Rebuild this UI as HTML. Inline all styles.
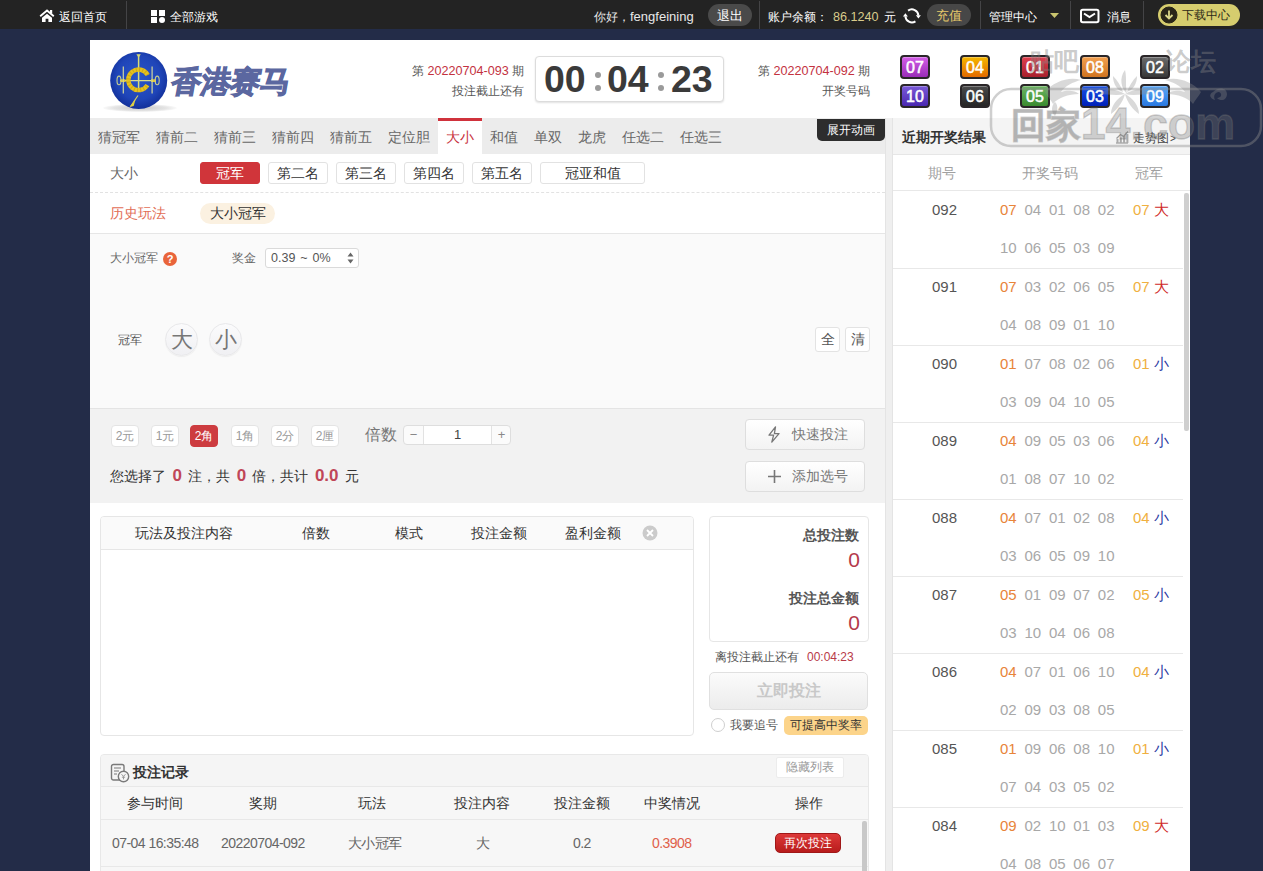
<!DOCTYPE html>
<html><head><meta charset="utf-8">
<style>
*{margin:0;padding:0;box-sizing:border-box}
html,body{width:1263px;height:871px;overflow:hidden}
body{background:#232c48;font-family:"Liberation Sans",sans-serif;font-size:12px;color:#333;position:relative}
.a{position:absolute;white-space:nowrap}
.ball{width:30px;height:24px;border:2px solid #2a2628;border-radius:4px;color:#fff;font-size:16px;-webkit-text-stroke:0.5px #fff;line-height:21px;text-align:center;box-shadow:inset 0 1px 0 rgba(255,255,255,.3)}
#top{position:absolute;left:0;top:0;width:1263px;height:29px;background:#232323;color:#fff;font-size:13px}
#top span.a{line-height:30px;top:2px;font-size:12px}
.sep{position:absolute;top:1px;width:1px;height:28px;background:#444446}
#top .pill{position:absolute;top:4px;height:22px;border-radius:11px;line-height:23px;text-align:center;font-size:13px}
#wrap{position:absolute;left:90px;top:40px;width:1100px;height:831px;background:#fff;overflow:hidden}

.sbtn{height:22px;border:1px solid #e2e2e2;border-radius:3px;background:#fff;text-align:center;line-height:20px;font-size:14px;color:#333}
.ballc{width:33px;height:33px;border-radius:50%;background:linear-gradient(#fbfbfc,#f0f0f3);border:1px solid #e8e8ea;box-shadow:0 1px 1px rgba(0,0,0,.05);text-align:center;line-height:31px;font-size:22px;color:#777}
.qbtn{width:25px;height:25px;border:1px solid #e3e3e3;border-radius:3px;background:#fff;text-align:center;line-height:23px;font-size:14px;color:#555}
.mbtn{width:28px;height:22px;border:1px solid #e4e4e4;border-radius:4px;background:#fff;text-align:center;line-height:20px;font-size:12px;color:#9a9a9a}
.rn{color:#c04658;font-size:17px;font-weight:bold;padding:0 2.5px}
.gbtn{width:120px;height:31px;border:1px solid #dedede;border-radius:4px;background:linear-gradient(#fff,#f3f3f3);font-size:14px;line-height:29px;color:#777;padding-left:46px}

.th{font-size:14px;line-height:22px;color:#333}
.rth{font-size:14px;line-height:22px;color:#333}
.rtd{font-size:14px;line-height:20px;color:#666;letter-spacing:-0.55px}

.srow{font-size:15px;line-height:38px}
.nums{color:#a8a8a8;word-spacing:3.6px}
</style></head><body>
<div id="top">
  <svg class="a" style="left:36px;top:6px" width="24" height="20" viewBox="0 0 24 20"><path d="M4.2 10.2L11 4.6l6.8 5.6" fill="none" stroke="#fff" stroke-width="1.9"/><rect x="14" y="4" width="2.2" height="3.6" fill="#fff"/><path d="M6 11.8L11 7.7l5 4.1V16h-3.6v-3.2h-2.8V16H6z" fill="#fff"/></svg>
  <span class="a" style="left:59px">返回首页</span>
  <div class="sep" style="left:126px"></div>
  <svg class="a" style="left:151px;top:10px" width="14" height="13" viewBox="0 0 14 13"><rect x="0" y="0" width="6" height="6" fill="#fff"/><rect x="8" y="0" width="6" height="6" fill="#fff"/><rect x="0" y="7" width="6" height="6" fill="#fff"/><circle cx="11" cy="10" r="3" fill="#fff"/></svg>
  <span class="a" style="left:170px">全部游戏</span>

  <span class="a" style="left:594px;color:#e8e8e8">你好，<span style="font-size:13px">fengfeining</span></span>
  <div class="pill a" style="left:708px;width:44px;background:#4a4a4a;color:#fff">退出</div>
  <div class="sep" style="left:759px"></div>
  <span class="a" style="left:768px">账户余额：</span>
  <span class="a" style="left:833px;color:#d9cc8c;font-size:12.6px">86.1240</span>
  <span class="a" style="left:884px">元</span>
  <svg class="a" style="left:902px;top:7px" width="19" height="17" viewBox="-1 0 19 17"><path d="M5.08 3.64A6.5 6.5 0 0 1 15.39 8.56M12.44 14.35A6.5 6.5 0 0 1 2.41 9.24" fill="none" stroke="#fff" stroke-width="2"/><path d="M12.9 8.2h5l-2.5 3.4zM-0.1 9.6h5l-2.5-3.4z" fill="#fff"/></svg>
  <div class="pill a" style="left:927px;width:44px;background:#474747;color:#e6c96a">充值</div>
  <div class="sep" style="left:980px"></div>
  <span class="a" style="left:989px">管理中心</span>
  <svg class="a" style="left:1050px;top:13px" width="9" height="6" viewBox="0 0 9 6"><path d="M0 0h9L4.5 5z" fill="#c9c46e"/></svg>
  <div class="sep" style="left:1070px"></div>
  <svg class="a" style="left:1080px;top:8px" width="20" height="16" viewBox="0 0 20 16"><rect x="1" y="1.8" width="17.5" height="12.5" rx="1.8" fill="none" stroke="#fff" stroke-width="2"/><path d="M4 5.5l5.5 3.6 5.5-3.6" fill="none" stroke="#fff" stroke-width="1.9"/></svg>
  <span class="a" style="left:1107px">消息</span>
  <div class="sep" style="left:1143px"></div>
  <div class="pill a" style="left:1158px;width:82px;background:#d6cd6e;color:#2e2a18;text-align:left;padding-left:24px;font-size:12px!important">下载中心</div>
  <svg class="a" style="left:1160px;top:6px" width="18" height="18" viewBox="0 0 18 18"><circle cx="9" cy="9" r="8" fill="#2a2618" stroke="#2a2618"/><path d="M9 4.5v8M5.5 9l3.5 3.5L12.5 9" fill="none" stroke="#dcd88a" stroke-width="1.8"/></svg>
</div>

<div id="wrap">
</div>

<!-- header -->
<div class="a" style="left:103px;top:104px;width:74px;height:8px;border-radius:50%;background:radial-gradient(ellipse at center,#c8c8c8 0%,#e4e4e4 50%,rgba(255,255,255,0) 75%)"></div>
<svg class="a" style="left:109px;top:51px" width="59" height="59" viewBox="0 0 59 59">
 <defs><radialGradient id="lg" cx="50%" cy="45%" r="55%"><stop offset="0" stop-color="#2a55c8"/><stop offset="0.7" stop-color="#1f45b8"/><stop offset="1" stop-color="#12309a"/></radialGradient></defs>
 <circle cx="29.7" cy="29.4" r="28.5" fill="url(#lg)"/>
 <g fill="none">
  <path d="M29.6 5v36" stroke="#d8dc78" stroke-width="1.5"/>
  <path d="M27.4 3.2h4.4l-2.2 3.6z" fill="#d8dc78"/>
  <path d="M11 29.6h36" stroke="#d8dc90" stroke-width="1.3"/>
  <path d="M11.5 29.6h5M42 29.6h5" stroke="#e8c82a" stroke-width="2.6"/>
  <path d="M14.3 15.4v27M43.1 15.4v27" stroke="#d0d8a0" stroke-width="1.2"/>
  <ellipse cx="10" cy="29.4" rx="2" ry="4.3" stroke="#c8d090" stroke-width="1.1"/>
  <ellipse cx="48.2" cy="29.4" rx="2" ry="4.3" stroke="#c8d090" stroke-width="1.1"/>
  <path d="M38.7 24.0A10.3 10.3 0 1 0 38.4 34.2" stroke="#e6c21e" stroke-width="4.4"/>
  <path d="M38.7 24.0A10.3 10.3 0 1 0 38.4 34.2" stroke="#b08a10" stroke-width="4.4" stroke-dasharray="1 2.2" opacity="0.45"/>
  <path d="M29 44.5l-7.5 11" stroke="#d8d060" stroke-width="1.2"/>
  <path d="M26.5 48.5l-5.8 7.5 4-1z" fill="#e0d040"/>
 </g>
</svg>
<div class="a" style="left:172px;top:62px;font-size:30px;line-height:40px;font-weight:900;color:#5b67a0;letter-spacing:-0.5px;transform:skewX(-10deg);-webkit-text-stroke:1px #5b67a0">香港赛马</div>

<div class="a" style="left:400px;top:61px;width:124px;text-align:right;font-size:12px;line-height:20px;color:#555">第 <span style="color:#c3323f;font-size:12.6px">20220704-093</span> 期</div>
<div class="a" style="left:400px;top:81px;width:124px;text-align:right;font-size:12px;line-height:20px;color:#555">投注截止还有</div>
<div class="a" style="left:535px;top:56px;width:189px;height:46px;border:1px solid #dcdcdc;border-radius:4px;box-shadow:0 1px 2px rgba(0,0,0,.12);background:#fff"></div>
<div class="a" style="left:544px;top:57px;font-size:37.5px;line-height:44px;font-weight:bold;color:#3a3a3a">00</div>
<div class="a" style="left:607px;top:57px;font-size:37.5px;line-height:44px;font-weight:bold;color:#3a3a3a">04</div>
<div class="a" style="left:671px;top:57px;font-size:37.5px;line-height:44px;font-weight:bold;color:#3a3a3a">23</div>
<div class="a" style="left:595px;top:72px;width:6px;height:6px;border-radius:3px;background:#9a9a9a"></div>
<div class="a" style="left:595px;top:85px;width:6px;height:6px;border-radius:3px;background:#9a9a9a"></div>
<div class="a" style="left:658px;top:72px;width:6px;height:6px;border-radius:3px;background:#9a9a9a"></div>
<div class="a" style="left:658px;top:85px;width:6px;height:6px;border-radius:3px;background:#9a9a9a"></div>

<div class="a" style="left:740px;top:61px;width:130px;text-align:right;font-size:12px;line-height:20px;color:#555">第 <span style="color:#c3323f;font-size:12.6px">20220704-092</span> 期</div>
<div class="a" style="left:740px;top:81px;width:130px;text-align:right;font-size:12px;line-height:20px;color:#555">开奖号码</div>
<div class="ball a" style="left:900px;top:55px;background:linear-gradient(#d45ee8,#9a2cb8)">07</div>
<div class="ball a" style="left:960px;top:55px;background:linear-gradient(#f5b800,#e36a00)">04</div>
<div class="ball a" style="left:1020px;top:55px;background:linear-gradient(#e0404e,#a8202c)">01</div>
<div class="ball a" style="left:1080px;top:55px;background:linear-gradient(#f2a050,#d07420)">08</div>
<div class="ball a" style="left:1140px;top:55px;background:linear-gradient(#6a6a6a,#383838)">02</div>
<div class="ball a" style="left:900px;top:84px;background:linear-gradient(#7a5ad8,#4a28b0)">10</div>
<div class="ball a" style="left:960px;top:84px;background:linear-gradient(#4a4a4a,#262626)">06</div>
<div class="ball a" style="left:1020px;top:84px;background:linear-gradient(#6cb860,#3a8a30)">05</div>
<div class="ball a" style="left:1080px;top:84px;background:linear-gradient(#1650e8,#0020b8)">03</div>
<div class="ball a" style="left:1140px;top:84px;background:linear-gradient(#5aa8f8,#2a78e0)">09</div>


<!-- tabs -->
<div class="a" style="left:90px;top:118px;width:795px;height:36px;background:#ececec"></div>
<div class="a" style="left:438px;top:118px;width:44px;height:36px;background:#fff;border-top:3px solid #d0323c"></div>
<div class="tabs a" style="left:90px;top:119px;height:36px;line-height:37px;font-size:14px;color:#666">
<span style="padding:0 8px">猜冠军</span><span style="padding:0 8px">猜前二</span><span style="padding:0 8px">猜前三</span><span style="padding:0 8px">猜前四</span><span style="padding:0 8px">猜前五</span><span style="padding:0 8px">定位胆</span><span style="padding:0 8px;color:#c8323c">大小</span><span style="padding:0 8px">和值</span><span style="padding:0 8px">单双</span><span style="padding:0 8px">龙虎</span><span style="padding:0 8px">任选二</span><span style="padding:0 8px">任选三</span>
</div>
<div class="a" style="left:817px;top:119px;width:68px;height:22px;background:#2d2d2d;border-radius:0 0 5px 5px;color:#fff;font-size:12px;line-height:22px;text-align:center">展开动画</div>
<div class="a" style="left:885px;top:118px;width:8px;height:753px;background:#efefef;border-left:1px solid #e4e4e4;border-right:1px solid #e4e4e4"></div>

<!-- sub-tabs -->
<div class="a" style="left:110px;top:162px;line-height:22px;font-size:14px;color:#666">大小</div>
<div class="a sbtn" style="left:200px;top:162px;width:60px;background:#d0353a;border-color:#d0353a;color:#fff">冠军</div>
<div class="a sbtn" style="left:268px;top:162px;width:60px">第二名</div>
<div class="a sbtn" style="left:336px;top:162px;width:60px">第三名</div>
<div class="a sbtn" style="left:404px;top:162px;width:60px">第四名</div>
<div class="a sbtn" style="left:472px;top:162px;width:60px">第五名</div>
<div class="a sbtn" style="left:540px;top:162px;width:105px">冠亚和值</div>
<div class="a" style="left:90px;top:192px;width:795px;height:0;border-top:1px dashed #e2e2e2"></div>
<div class="a" style="left:110px;top:202px;line-height:22px;font-size:14px;color:#e26d55">历史玩法</div>
<div class="a" style="left:200px;top:203px;width:75px;height:21px;border-radius:11px;background:#fbf1e1;line-height:21px;text-align:center;font-size:14px;color:#333">大小冠军</div>
<div class="a" style="left:90px;top:233px;width:795px;height:1px;background:#e6e6e6"></div>

<!-- play area -->
<div class="a" style="left:90px;top:234px;width:795px;height:174px;background:#fafafa"></div>
<div class="a" style="left:110px;top:249px;line-height:19px;font-size:12px;color:#666">大小冠军</div>
<div class="a" style="left:163px;top:252px;width:14px;height:14px;border-radius:7px;background:#e9643a;color:#fff;font-size:11px;line-height:14px;text-align:center;font-weight:bold">?</div>
<div class="a" style="left:232px;top:249px;line-height:19px;font-size:12px;color:#666">奖金</div>
<div class="a" style="left:265px;top:248px;width:94px;height:20px;border:1px solid #dadada;border-radius:3px;background:#fff;font-size:12.5px;line-height:19px;color:#555;padding-left:5px;word-spacing:1.5px">0.39 ~ 0%</div>
<svg class="a" style="left:347px;top:252px" width="7" height="12" viewBox="0 0 7 12"><path d="M3.5 0.5L6.5 4.5h-6zM3.5 11.5L6.5 7.5h-6z" fill="#666"/></svg>

<div class="a" style="left:118px;top:331px;line-height:19px;font-size:12px;color:#555">冠军</div>
<div class="a ballc" style="left:165px;top:323px">大</div>
<div class="a ballc" style="left:209px;top:323px">小</div>
<div class="a qbtn" style="left:815px;top:327px">全</div>
<div class="a qbtn" style="left:845px;top:327px">清</div>
<div class="a" style="left:90px;top:408px;width:795px;height:1px;background:#e4e4e4"></div>

<!-- money area -->
<div class="a" style="left:90px;top:409px;width:795px;height:94px;background:#f2f2f2"></div>
<div class="a mbtn" style="left:111px;top:425px">2元</div>
<div class="a mbtn" style="left:151px;top:425px">1元</div>
<div class="a mbtn" style="left:190px;top:425px;background:#cd3c40;border-color:#cd3c40;color:#fff">2角</div>
<div class="a mbtn" style="left:231px;top:425px">1角</div>
<div class="a mbtn" style="left:271px;top:425px">2分</div>
<div class="a mbtn" style="left:311px;top:425px">2厘</div>
<div class="a" style="left:365px;top:424px;line-height:22px;font-size:15.5px;color:#777">倍数</div>
<div class="a" style="left:403px;top:425px;width:108px;height:20px;border:1px solid #dedede;border-radius:4px;background:#fbfbfb"></div>
<div class="a" style="left:423px;top:426px;width:69px;height:18px;background:#fff;border-left:1px solid #e2e2e2;border-right:1px solid #e2e2e2;text-align:center;font-size:13px;line-height:18px;color:#444">1</div>
<div class="a" style="left:404px;top:426px;width:19px;line-height:18px;text-align:center;color:#888;font-size:13px">−</div>
<div class="a" style="left:492px;top:426px;width:19px;line-height:18px;text-align:center;color:#888;font-size:13px">+</div>
<div class="a" style="left:110px;top:465px;line-height:22px;font-size:14px;color:#333">您选择了 <b class="rn">0</b> 注，共 <b class="rn">0</b> 倍，共计 <b class="rn">0.0</b> 元</div>
<div class="a gbtn" style="left:745px;top:419px">快速投注</div>
<svg class="a" style="left:767px;top:426px" width="14" height="17" viewBox="0 0 14 17"><path d="M8.5 0.8L2 9.2h4.6L4.8 16.2 12 7.6H7.4z" fill="none" stroke="#777" stroke-width="1.3" stroke-linejoin="round"/></svg>
<div class="a gbtn" style="left:745px;top:461px">添加选号</div>
<svg class="a" style="left:767px;top:469px" width="15" height="15" viewBox="0 0 15 15"><path d="M7.5 1v13M1 7.5h13" stroke="#777" stroke-width="1.6"/></svg>

<!-- bet list table -->
<div class="a" style="left:100px;top:516px;width:594px;height:220px;border:1px solid #e6e6e6;border-radius:4px;background:#fff;overflow:hidden">
 <div style="height:33px;background:#fafafa;border-bottom:1px solid #e6e6e6"></div>
</div>
<div class="a th" style="left:135px;top:522px">玩法及投注内容</div>
<div class="a th" style="left:302px;top:522px">倍数</div>
<div class="a th" style="left:395px;top:522px">模式</div>
<div class="a th" style="left:471px;top:522px">投注金额</div>
<div class="a th" style="left:565px;top:522px">盈利金额</div>
<svg class="a" style="left:642px;top:525px" width="16" height="16" viewBox="0 0 16 16"><circle cx="8" cy="8" r="7.5" fill="#cbcbcb"/><path d="M5 5l6 6M11 5l-6 6" stroke="#fff" stroke-width="1.8"/></svg>

<!-- summary panel -->
<div class="a" style="left:709px;top:516px;width:160px;height:126px;border:1px solid #e6e6e6;border-radius:4px;background:#fff"></div>
<div class="a" style="left:709px;top:524px;width:150px;text-align:right;font-size:14px;font-weight:bold;line-height:22px;color:#555">总投注数</div>
<div class="a" style="left:709px;top:546px;width:151px;text-align:right;font-size:21px;line-height:28px;color:#b53a4a">0</div>
<div class="a" style="left:709px;top:587px;width:150px;text-align:right;font-size:14px;font-weight:bold;line-height:22px;color:#555">投注总金额</div>
<div class="a" style="left:709px;top:609px;width:151px;text-align:right;font-size:21px;line-height:28px;color:#b53a4a">0</div>
<div class="a" style="left:715px;top:647px;font-size:12px;line-height:20px;color:#555">离投注截止还有</div>
<div class="a" style="left:807px;top:647px;font-size:12px;line-height:20px;color:#b83a48">00:04:23</div>
<div class="a" style="left:709px;top:672px;width:159px;height:38px;border:1px solid #e0e0e0;border-radius:5px;background:linear-gradient(#fbfbfb,#ececec);text-align:center;font-size:16px;font-weight:bold;line-height:36px;color:#c8c8c8">立即投注</div>
<div class="a" style="left:711px;top:718px;width:14px;height:14px;border:1px solid #cfcfcf;border-radius:50%;background:#fff"></div>
<div class="a" style="left:730px;top:715px;font-size:12px;line-height:20px;color:#555">我要追号</div>
<div class="a" style="left:784px;top:716px;width:84px;height:19px;border-radius:5px;background:#fcd48a;text-align:center;font-size:12px;line-height:19px;color:#333">可提高中奖率</div>

<!-- bet records -->
<div class="a" style="left:100px;top:754px;width:769px;height:130px;border:1px solid #e8e8e8;border-radius:4px;background:#f7f7f7;overflow:hidden">
 <div style="height:32px;background:#f5f5f5;border-bottom:1px solid #e8e8e8"></div>
 <div style="height:33px;background:#f7f7f7;border-bottom:1px solid #e8e8e8"></div>
 <div style="height:47px;background:#f7f7f7;border-bottom:1px solid #e8e8e8"></div>
</div>
<svg class="a" style="left:110px;top:763px" width="20" height="20" viewBox="0 0 20 20"><rect x="1.5" y="1.5" width="12.5" height="15.5" rx="2" fill="none" stroke="#7a7a7a" stroke-width="1.4"/><path d="M4 5h7M4 8h5M4 11h3" stroke="#7a7a7a" stroke-width="1.2"/><circle cx="13.5" cy="13.5" r="5.2" fill="#f5f5f5" stroke="#7a7a7a" stroke-width="1.4"/><path d="M11.5 11.2l2 2.2 2-2.2M13.5 13.4v3M11.9 14.2h3.2" fill="none" stroke="#999" stroke-width="1"/></svg>
<div class="a" style="left:133px;top:761px;font-size:14px;font-weight:bold;line-height:22px;color:#333">投注记录</div>
<div class="a" style="left:776px;top:757px;width:68px;height:21px;border:1px solid #ececec;border-radius:2px;background:#fff;text-align:center;font-size:12px;line-height:19px;color:#999">隐藏列表</div>
<div class="a rth" style="left:127px;top:792px">参与时间</div>
<div class="a rth" style="left:249px;top:792px">奖期</div>
<div class="a rth" style="left:358px;top:792px">玩法</div>
<div class="a rth" style="left:454px;top:792px">投注内容</div>
<div class="a rth" style="left:554px;top:792px">投注金额</div>
<div class="a rth" style="left:644px;top:792px">中奖情况</div>
<div class="a rth" style="left:795px;top:792px">操作</div>
<div class="a rtd" style="left:112px;top:833px">07-04 16:35:48</div>
<div class="a rtd" style="left:221px;top:833px">20220704-092</div>
<div class="a rtd" style="left:348px;top:833px">大小冠军</div>
<div class="a rtd" style="left:476px;top:833px">大</div>
<div class="a rtd" style="left:573px;top:833px">0.2</div>
<div class="a rtd" style="left:652px;top:833px;color:#e0604a">0.3908</div>
<div class="a" style="left:775px;top:833px;width:66px;height:20px;border:1px solid #a01818;border-radius:5px;background:linear-gradient(#dd3838,#b81c1c);text-align:center;font-size:12px;line-height:18px;color:#fff">再次投注</div>
<div class="a" style="left:862px;top:821px;width:5px;height:60px;border-radius:2px;background:#c8c8c8"></div>

<!-- sidebar -->
<div class="a" style="left:893px;top:118px;width:297px;height:37px;background:#f4f4f4;border-bottom:1px solid #e6e6e6"></div>
<div class="a" style="left:902px;top:126px;font-size:14px;font-weight:bold;line-height:22px;color:#333">近期开奖结果</div>
<svg class="a" style="left:1115px;top:130px" width="14" height="14" viewBox="0 0 14 14"><path d="M1 13h12" stroke="#999" stroke-width="1.2"/><rect x="1.5" y="9" width="2" height="4" fill="#aaa"/><rect x="4.8" y="7.5" width="2" height="5.5" fill="#aaa"/><rect x="8.1" y="6" width="2" height="7" fill="#aaa"/><rect x="11.4" y="4" width="2" height="9" fill="#aaa"/><path d="M1.5 8.5l4-4 3 2 4.5-5" fill="none" stroke="#999" stroke-width="1.2"/></svg>
<div class="a" style="left:1133px;top:127px;font-size:12px;line-height:22px;color:#444">走势图<span style="font-size:10px;padding-left:1px">&gt;</span></div>
<div class="a" style="left:893px;top:155px;width:297px;height:36px;background:#fff;border-bottom:1px solid #e8e8e8"></div>
<div class="a" style="left:928px;top:162px;font-size:14px;line-height:22px;color:#a0a0a0">期号</div>
<div class="a" style="left:1022px;top:162px;font-size:14px;line-height:22px;color:#a0a0a0">开奖号码</div>
<div class="a" style="left:1135px;top:162px;font-size:14px;line-height:22px;color:#a0a0a0">冠军</div>
<div class="a" style="left:1184px;top:193px;width:5px;height:238px;border-radius:2px;background:#cfcfcf"></div>
<div class="a" style="left:893px;top:268px;width:290px;height:1px;background:#e8e8e8"></div>
<div class="a srow" style="left:932px;top:191px;color:#555">092</div>
<div class="a srow nums" style="left:1000px;top:191px"><span style="color:#e8843a">07</span> 04 01 08 02<br>10 06 05 03 09</div>
<div class="a srow" style="left:1133px;top:191px"><span style="color:#f0b040">07</span> <span style="color:#d02a2a">大</span></div>
<div class="a" style="left:893px;top:345px;width:290px;height:1px;background:#e8e8e8"></div>
<div class="a srow" style="left:932px;top:268px;color:#555">091</div>
<div class="a srow nums" style="left:1000px;top:268px"><span style="color:#e8843a">07</span> 03 02 06 05<br>04 08 09 01 10</div>
<div class="a srow" style="left:1133px;top:268px"><span style="color:#f0b040">07</span> <span style="color:#d02a2a">大</span></div>
<div class="a" style="left:893px;top:422px;width:290px;height:1px;background:#e8e8e8"></div>
<div class="a srow" style="left:932px;top:345px;color:#555">090</div>
<div class="a srow nums" style="left:1000px;top:345px"><span style="color:#e8843a">01</span> 07 08 02 06<br>03 09 04 10 05</div>
<div class="a srow" style="left:1133px;top:345px"><span style="color:#f0b040">01</span> <span style="color:#2838a0">小</span></div>
<div class="a" style="left:893px;top:499px;width:290px;height:1px;background:#e8e8e8"></div>
<div class="a srow" style="left:932px;top:422px;color:#555">089</div>
<div class="a srow nums" style="left:1000px;top:422px"><span style="color:#e8843a">04</span> 09 05 03 06<br>01 08 07 10 02</div>
<div class="a srow" style="left:1133px;top:422px"><span style="color:#f0b040">04</span> <span style="color:#2838a0">小</span></div>
<div class="a" style="left:893px;top:576px;width:290px;height:1px;background:#e8e8e8"></div>
<div class="a srow" style="left:932px;top:499px;color:#555">088</div>
<div class="a srow nums" style="left:1000px;top:499px"><span style="color:#e8843a">04</span> 07 01 02 08<br>03 06 05 09 10</div>
<div class="a srow" style="left:1133px;top:499px"><span style="color:#f0b040">04</span> <span style="color:#2838a0">小</span></div>
<div class="a" style="left:893px;top:653px;width:290px;height:1px;background:#e8e8e8"></div>
<div class="a srow" style="left:932px;top:576px;color:#555">087</div>
<div class="a srow nums" style="left:1000px;top:576px"><span style="color:#e8843a">05</span> 01 09 07 02<br>03 10 04 06 08</div>
<div class="a srow" style="left:1133px;top:576px"><span style="color:#f0b040">05</span> <span style="color:#2838a0">小</span></div>
<div class="a" style="left:893px;top:730px;width:290px;height:1px;background:#e8e8e8"></div>
<div class="a srow" style="left:932px;top:653px;color:#555">086</div>
<div class="a srow nums" style="left:1000px;top:653px"><span style="color:#e8843a">04</span> 07 01 06 10<br>02 09 03 08 05</div>
<div class="a srow" style="left:1133px;top:653px"><span style="color:#f0b040">04</span> <span style="color:#2838a0">小</span></div>
<div class="a" style="left:893px;top:807px;width:290px;height:1px;background:#e8e8e8"></div>
<div class="a srow" style="left:932px;top:730px;color:#555">085</div>
<div class="a srow nums" style="left:1000px;top:730px"><span style="color:#e8843a">01</span> 09 06 08 10<br>07 04 03 05 02</div>
<div class="a srow" style="left:1133px;top:730px"><span style="color:#f0b040">01</span> <span style="color:#2838a0">小</span></div>
<div class="a" style="left:893px;top:884px;width:290px;height:1px;background:#e8e8e8"></div>
<div class="a srow" style="left:932px;top:807px;color:#555">084</div>
<div class="a srow nums" style="left:1000px;top:807px"><span style="color:#e8843a">09</span> 02 10 01 03<br>04 08 05 06 07</div>
<div class="a srow" style="left:1133px;top:807px"><span style="color:#f0b040">09</span> <span style="color:#d02a2a">大</span></div>

<!-- watermark -->
<svg class="a" style="left:985px;top:40px" width="278" height="112" viewBox="0 0 278 112">
 <g fill="none" stroke="rgba(140,140,140,0.42)" stroke-width="2.5">
  <path d="M26 49h230a20 20 0 0 1 20 20v17a20 20 0 0 1-20 20H26a20 20 0 0 1-20-20V69a20 20 0 0 1 20-20z"/>
 </g>
 <g fill="rgba(140,140,140,0.33)">
  <path d="M60 52c8-10 24-16 36-12-8 2-16 6-20 12 6-2 14-2 18 2-10 0-22 4-26 10-2-4-6-8-8-12z"/>
  <path d="M70 62c-4 4-4 10 0 14 2-4 4-10 0-14z"/>
  <path d="M140 30c-6 8-4 18 2 24-2-8 0-16-2-24zM140 54c-10-6-20-6-26 0 8 0 18 2 26 0zM140 54c10-6 20-6 26 0-8 0-18 2-26 0zM140 54c-8 4-14 12-14 20 6-4 12-12 14-20zM140 54c8 4 14 12 14 20-6-4-12-12-14-20z"/>
  <path d="M128 36c4 4 8 10 10 16-6-2-10-8-10-16zM152 36c-4 4-8 10-10 16 6-2 10-8 10-16z"/>
  <path d="M216 52c-8-10-24-16-36-12 8 2 16 6 20 12-6-2-14-2-18 2 10 0 22 4 26 10 2-4 6-8 8-12z"/>
  <path d="M228 52c6-6 14-4 14 2s-6 8-10 4c4 0 6-4 2-6-4 0-6 4-4 8-6-2-6-6-2-8z"/>
 </g>
 <text x="26" y="99" font-family="Liberation Sans,sans-serif" font-weight="bold" fill="rgba(120,120,120,0.32)" stroke="rgba(120,120,120,0.32)" stroke-width="1.3" textLength="224" lengthAdjust="spacingAndGlyphs"><tspan font-size="35" dy="-2.5">回家</tspan><tspan font-size="45" dy="2.5">14.com</tspan></text>
 <text x="44" y="30" font-family="Liberation Sans,sans-serif" font-weight="bold" font-size="25" fill="rgba(130,130,130,0.42)">贴吧</text>
 <text x="181" y="30" font-family="Liberation Sans,sans-serif" font-weight="bold" font-size="25" fill="rgba(130,130,130,0.42)">论坛</text>
</svg>
</body></html>
